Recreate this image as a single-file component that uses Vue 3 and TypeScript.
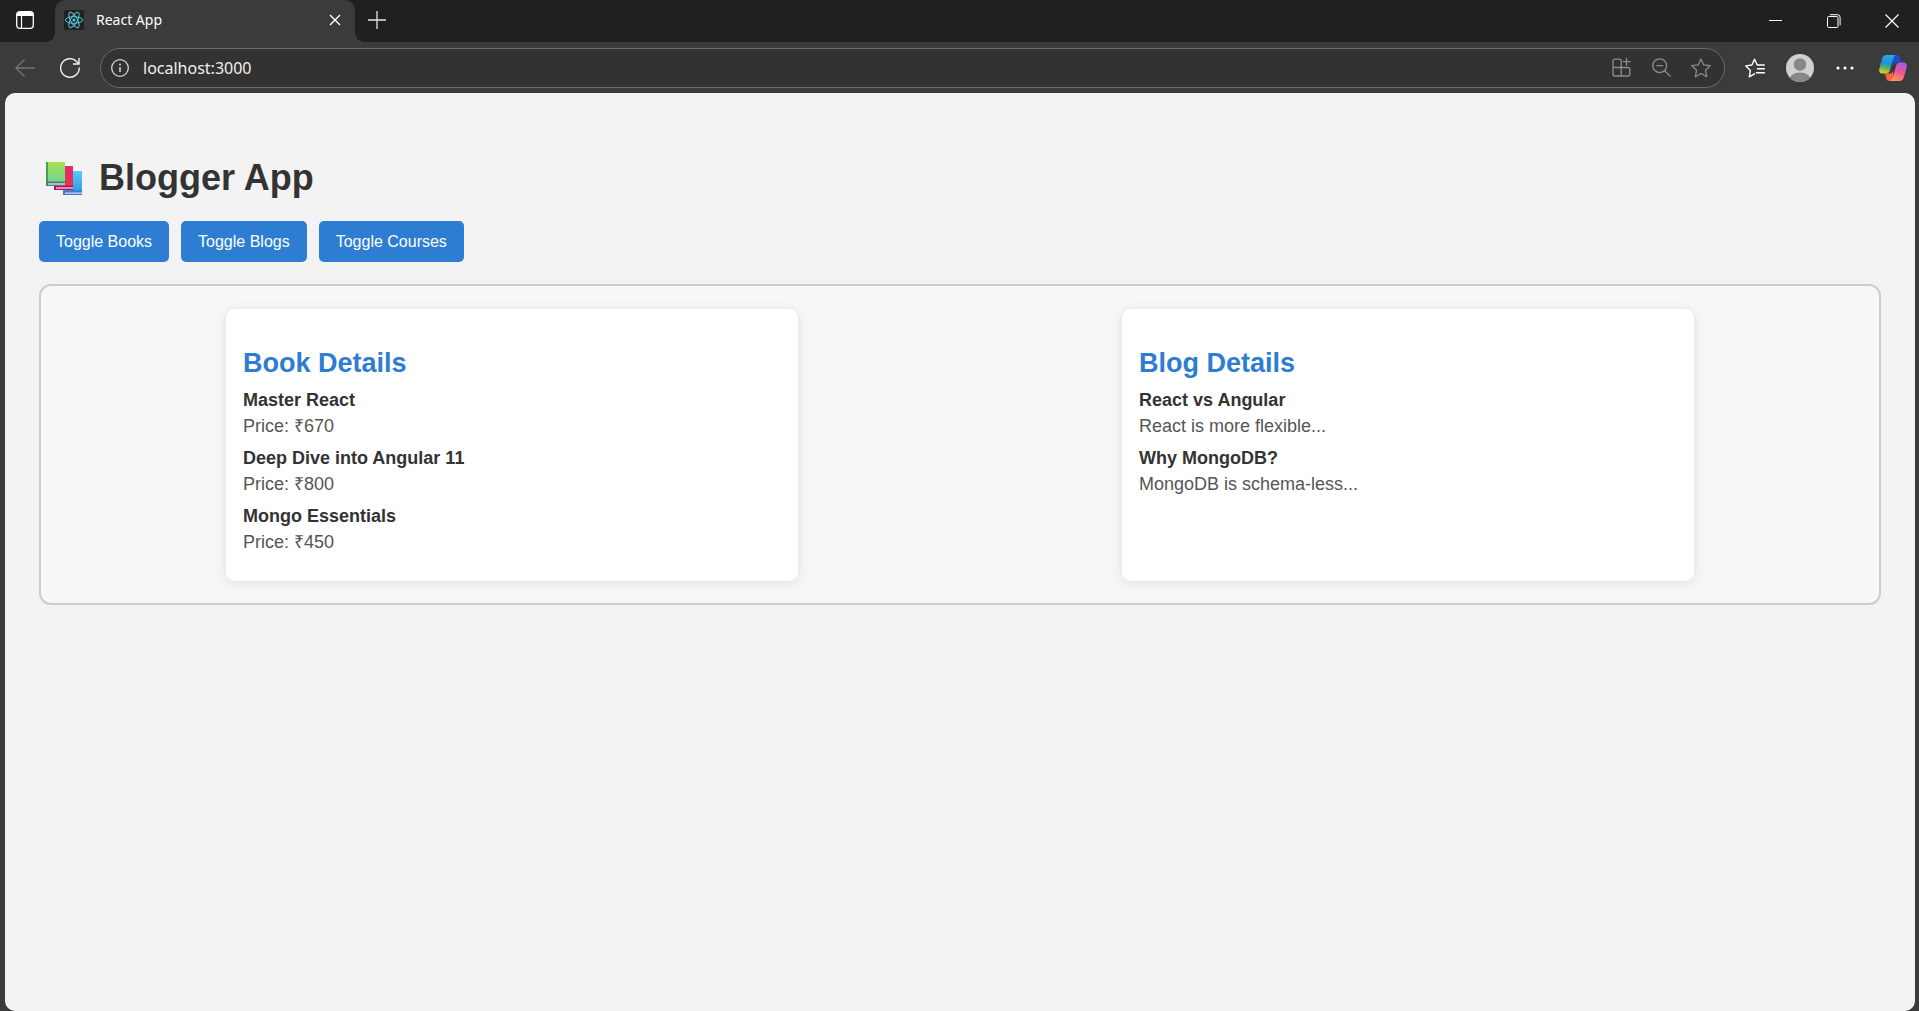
<script setup lang="ts">
import { ref } from 'vue'

interface Entry {
  title: string
  text: string
}

interface Panel {
  id: string
  heading: string
  entries: Entry[]
}

const address = ref('localhost:3000')
const visible = ref<Record<string, boolean>>({ books: true, blogs: true, courses: false })

const toggles = [
  { id: 'books', label: 'Toggle Books' },
  { id: 'blogs', label: 'Toggle Blogs' },
  { id: 'courses', label: 'Toggle Courses' },
]

const panels: Panel[] = [
  {
    id: 'books',
    heading: 'Book Details',
    entries: [
      { title: 'Master React', text: 'Price: ₹670' },
      { title: 'Deep Dive into Angular 11', text: 'Price: ₹800' },
      { title: 'Mongo Essentials', text: 'Price: ₹450' },
    ],
  },
  {
    id: 'blogs',
    heading: 'Blog Details',
    entries: [
      { title: 'React vs Angular', text: 'React is more flexible...' },
      { title: 'Why MongoDB?', text: 'MongoDB is schema-less...' },
    ],
  },
]

function toggle(id: string) {
  visible.value[id] = !visible.value[id]
}
</script>

<template>
  <div class="browser">
    <header class="tab-strip">
      <button class="workspace" type="button" aria-label="Tab actions">
        <svg width="18" height="18" viewBox="0 0 18 18" fill="none" stroke="#fff">
          <rect x="0.7" y="0.7" width="16.6" height="16.6" rx="3" stroke-width="1.3" />
          <path d="M1 3.5a2.5 2.5 0 0 1 2.500-2.500h11a2.500 2.500 0 0 1 2.500 2.500V5H1z" fill="#fff" stroke="none" />
          <path d="M5.500 5v12" stroke-width="1.2" />
        </svg>
      </button>
      <div class="tab">
        <svg class="favicon" width="20" height="20" viewBox="0 0 20 20" fill="none" stroke="#58c4dc" stroke-width="1">
          <rect width="20" height="20" rx="1" fill="#222" stroke="none" />
          <ellipse cx="10" cy="10" rx="8.600" ry="3.300" />
          <ellipse cx="10" cy="10" rx="8.600" ry="3.300" transform="rotate(60 10 10)" />
          <ellipse cx="10" cy="10" rx="8.600" ry="3.300" transform="rotate(120 10 10)" />
          <circle cx="10" cy="10" r="1.600" fill="#58c4dc" stroke="none" />
        </svg>
        <span class="tab-title">React App</span>
        <button class="tab-close" type="button" aria-label="Close tab">
          <svg width="12" height="12" viewBox="0 0 12 12" stroke="#fff" stroke-width="1.4">
            <path d="M1 1l10 10M11 1L1 11" />
          </svg>
        </button>
      </div>
      <button class="new-tab" type="button" aria-label="New tab">
        <svg width="18" height="18" viewBox="0 0 18 18" stroke="#e6e6e6" stroke-width="1.3">
          <path d="M9 0v18M0 9h18" />
        </svg>
      </button>
      <div class="window-controls">
        <button type="button" aria-label="Minimize">
          <svg width="14" height="14" viewBox="0 0 14 14" stroke="#fff"><path d="M0 6.500h13" /></svg>
        </button>
        <button type="button" aria-label="Restore">
          <svg width="14" height="14" viewBox="0 0 14 14" fill="none" stroke="#fff">
            <rect x="0.5" y="2.500" width="10.500" height="11" rx="1.200" />
            <path d="M3 .7h7.500a2.600 2.600 0 0 1 2.600 2.600v8" />
          </svg>
        </button>
        <button type="button" aria-label="Close window">
          <svg width="14" height="14" viewBox="0 0 14 14" stroke="#fff" stroke-width="1.200">
            <path d="M.5.5l13 13M13.500.5l-13 13" />
          </svg>
        </button>
      </div>
    </header>

    <nav class="toolbar" aria-label="Browser toolbar">
      <button class="tool" type="button" aria-label="Back" disabled>
        <svg width="20" height="18" viewBox="0 0 20 18" fill="none" stroke="#757575" stroke-width="1.300">
          <path d="M20 9H1M9.500.5L1 9l8.500 8.500" />
        </svg>
      </button>
      <button class="tool" type="button" aria-label="Reload">
        <svg width="20" height="20" viewBox="0 0 20 20" fill="none" stroke="#f2f2f2" stroke-width="1.400">
          <path d="M19.200 9.500A9.300 9.300 0 1 1 16.800 3.700L18.800 5.700" />
          <path d="M19 0v6h-6" />
        </svg>
      </button>
      <div class="omnibox">
        <svg width="18" height="18" viewBox="0 0 18 18" fill="none" stroke="#d6d6d6" stroke-width="1.300">
          <circle cx="9" cy="9" r="8.300" />
          <path d="M9 8v5" stroke-width="1.500" />
          <circle cx="9" cy="5.500" r="1" fill="#d6d6d6" stroke="none" />
        </svg>
        <input v-model="address" class="address" type="text" aria-label="Address" />
        <button type="button" aria-label="Install app">
          <svg width="19" height="19" viewBox="0 0 19 19" fill="none" stroke="#8c8c8c" stroke-width="1.300">
            <path d="M9.200 9.500V3.200a2 2 0 0 0-2-2H3a2 2 0 0 0-2 2V16a2 2 0 0 0 2 2h12.800a2 2 0 0 0 2-2v-4.500a2 2 0 0 0-2-2H1M9.200 9.500V18" />
            <path d="M14.500 0v7.500M10.800 3.700h7.700" />
          </svg>
        </button>
        <button type="button" aria-label="Zoom">
          <svg width="19" height="19" viewBox="0 0 19 19" fill="none" stroke="#8c8c8c" stroke-width="1.300">
            <circle cx="7.700" cy="7.700" r="6.900" />
            <path d="M4.300 7.700h6.800M12.700 12.700l5.800 5.800" />
          </svg>
        </button>
        <button type="button" aria-label="Add to favorites">
          <svg width="20" height="20" viewBox="0 0 20 20" fill="none" stroke="#8c8c8c" stroke-width="1.300" stroke-linejoin="round">
            <path d="M10 1l2.700 5.900 6.500.8-4.800 4.500 1.300 6.500L10 15.500l-5.700 3.200 1.300-6.500L.8 7.700l6.500-.8z" />
          </svg>
        </button>
      </div>
      <button class="tool" type="button" aria-label="Favorites">
        <svg width="20" height="20" viewBox="0 0 20 20" fill="none" stroke="#fff" stroke-width="1.400" stroke-linejoin="round" stroke-linecap="round">
          <path d="M9.500 15.800L4.300 18.800l1.100-6.400L.8 7.900l6.100-.9L9.500 1.200 12.200 7h7" />
          <path d="M12.500 10.800h7M11.500 14.700h8" />
        </svg>
      </button>
      <button class="tool" type="button" aria-label="Profile">
        <svg width="28" height="28" viewBox="0 0 28 28">
          <defs><clipPath id="avatar"><circle cx="14" cy="14" r="14" /></clipPath></defs>
          <g clip-path="url(#avatar)">
            <rect width="28" height="28" fill="#d2d0ce" />
            <circle cx="14" cy="10.500" r="6.200" fill="#8a8886" />
            <ellipse cx="14" cy="26" rx="11" ry="7.500" fill="#8a8886" />
          </g>
        </svg>
      </button>
      <button class="tool" type="button" aria-label="Settings and more">
        <svg width="18" height="4" viewBox="0 0 18 4" fill="#fff">
          <circle cx="2" cy="2" r="1.600" /><circle cx="9" cy="2" r="1.600" /><circle cx="16" cy="2" r="1.600" />
        </svg>
      </button>
      <button class="tool copilot" type="button" aria-label="Copilot">
        <svg width="28" height="26" viewBox="0 0 28 26">
          <defs>
            <linearGradient id="cool" x1="0.5" y1="0" x2="0.3" y2="1">
              <stop offset="0" stop-color="#27a9f0" /><stop offset="0.45" stop-color="#1e90d8" />
              <stop offset="0.7" stop-color="#59b45b" /><stop offset="1" stop-color="#f4cc12" />
            </linearGradient>
            <linearGradient id="warm" x1="0.7" y1="0" x2="0.3" y2="1">
              <stop offset="0" stop-color="#a25bf0" /><stop offset="0.5" stop-color="#ee5590" />
              <stop offset="1" stop-color="#ff9a50" />
            </linearGradient>
          </defs>
          <path d="M14 0h3.800c1.800 0 2.500 1.300 3 3l1.200 4.500h-4.500c-2 0-3 1-3.600 3z" fill="#174fd6" />
          <path d="M14 26h-3.800c-1.800 0-2.500-1.300-3-3L6 18.500h4.500c2 0 3-1 3.600-3z" fill="#f4653e" />
          <path d="M7.500 0H17c-1.600.4-2.200 1.800-2.700 3.500l-3.500 12c-.7 2.300-2 3-4 3H3.500C.8 18.500-.4 16.500.3 13.700L3 4C3.800 1.200 5.200 0 7.500 0z" fill="url(#cool)" />
          <path d="M20.500 26H11c1.600-.4 2.200-1.800 2.700-3.500l3.500-12c.7-2.300 2-3 4-3h3.300c2.700 0 3.900 2 3.200 4.800L25 22c-.8 2.800-2.200 4-4.500 4z" fill="url(#warm)" />
        </svg>
      </button>
    </nav>

    <main class="page">
      <h1>
        <svg width="36" height="34" viewBox="0 0 36 34" aria-hidden="true">
          <defs>
            <linearGradient id="green" x1="0" y1="0" x2="0" y2="1">
              <stop offset="0" stop-color="#a6e04f" /><stop offset="1" stop-color="#6fd694" />
            </linearGradient>
            <linearGradient id="red" x1="0" y1="0" x2="0" y2="1">
              <stop offset="0" stop-color="#e32a78" /><stop offset="1" stop-color="#e0383f" />
            </linearGradient>
            <linearGradient id="blue" x1="0" y1="0" x2="0" y2="1">
              <stop offset="0" stop-color="#52cdf5" /><stop offset="1" stop-color="#2f9bee" />
            </linearGradient>
          </defs>
          <rect x="17" y="10" width="19" height="21" fill="url(#blue)" />
          <path d="M17 29.500h19V34H17z" fill="#3f78cc" />
          <path d="M19 31.500h17v1.300H19z" fill="#d9d0f5" />
          <rect x="8" y="5" width="19" height="21" fill="url(#red)" />
          <path d="M8 24.500h19V29H8z" fill="#b01350" />
          <path d="M10 26.300h17v1.400H10z" fill="#f3c7e6" />
          <rect y="1" width="19" height="21" fill="url(#green)" />
          <path d="M0 1h2v21H0z" fill="#46a04d" />
          <path d="M0 20.500h19V25H0z" fill="#4d7d78" />
          <path d="M2 22.300h17v1.400H2z" fill="#ddd3f0" />
        </svg>
        <span>Blogger App</span>
      </h1>

      <div class="toggles">
        <button v-for="item in toggles" :key="item.id" type="button" :aria-pressed="visible[item.id]" @click="toggle(item.id)">
          {{ item.label }}
        </button>
      </div>

      <div class="board">
        <template v-for="panel in panels" :key="panel.id">
          <section v-if="visible[panel.id]" class="card">
            <h2>{{ panel.heading }}</h2>
            <article v-for="entry in panel.entries" :key="entry.title">
              <h3>{{ entry.title }}</h3>
              <p>{{ entry.text }}</p>
            </article>
          </section>
        </template>
      </div>
    </main>
  </div>
</template>

<style>
body {
  background: #3b3b3b;
}
</style>

<style scoped>
.browser {
  display: flex;
  flex-direction: column;
  min-height: 100vh;
  background: #3b3b3b;
  font-family: "Noto Sans", sans-serif;
}

button {
  display: flex;
  align-items: center;
  justify-content: center;
  padding: 0;
  border: 0;
  background: none;
  font: inherit;
}

svg {
  display: block;
  flex: none;
}

.tab-strip {
  display: flex;
  height: 42px;
  background: #202020;
}

.workspace {
  width: 50px;
  height: 40px;
  margin-right: 5px;
}

.tab {
  position: relative;
  display: flex;
  align-items: center;
  box-sizing: border-box;
  width: 300px;
  padding: 0 12px 2px 9px;
  border-radius: 10px 10px 0 0;
  background: #3b3b3b;
}

.tab::before,
.tab::after {
  content: "";
  position: absolute;
  bottom: 0;
  width: 10px;
  height: 10px;
}

.tab::before {
  right: 100%;
  background: radial-gradient(circle at 0 0, #202020 10px, #3b3b3b 10px);
}

.tab::after {
  left: 100%;
  background: radial-gradient(circle at 100% 0, #202020 10px, #3b3b3b 10px);
}

.tab-title {
  flex: 1;
  margin-left: 12px;
  color: #fff;
  font-size: 14px;
  line-height: 20px;
}

.tab-close {
  width: 16px;
  height: 16px;
}

.new-tab {
  width: 44px;
  height: 40px;
}

.window-controls {
  display: flex;
  gap: 4px;
  margin-left: auto;
}

.window-controls button {
  width: 54px;
}

.toolbar {
  display: flex;
  align-items: center;
  height: 51px;
  padding: 0 1px 0 2px;
}

.tool {
  flex: none;
  width: 45px;
  height: 40px;
}

.copilot {
  width: 51px;
}

.omnibox {
  display: flex;
  flex: 1;
  align-items: center;
  box-sizing: border-box;
  height: 40px;
  margin: 0 7px 0 8px;
  padding: 0 3px 0 10px;
  border: 1px solid #6b6b6b;
  border-radius: 20px;
  background: #323232;
}

.omnibox button {
  width: 40px;
  height: 32px;
}

.address {
  flex: 1;
  min-width: 0;
  height: 32px;
  margin-left: 14px;
  padding: 0;
  border: 0;
  outline: 0;
  background: none;
  color: #f0f0f0;
  font: 16px/24px "Noto Sans", sans-serif;
}

.page {
  flex: 1;
  margin: 0 4px 0 5px;
  padding: 64px 34px 34px;
  border-radius: 10px;
  background: #f3f3f3;
  font-family: "Liberation Sans", Arial, sans-serif;
}

h1,
h2,
h3,
p {
  margin: 0;
}

h1 {
  display: flex;
  align-items: center;
  gap: 17px;
  padding-left: 7px;
  color: #333;
  font-size: 36px;
  line-height: 42px;
}

.toggles {
  display: flex;
  gap: 12px;
  margin: 22px 0;
}

.toggles button {
  height: 41px;
  padding: 0 17px;
  border-radius: 5px;
  background: #2d7dd2;
  color: #fff;
  font-size: 16px;
}

.board {
  display: flex;
  justify-content: space-around;
  padding: 23px 23px 22px;
  border: 2px solid #ccc;
  border-radius: 12px;
  background: #f7f7f7;
}

.card {
  box-sizing: border-box;
  width: 572px;
  padding: 38px 17px 26px;
  border-radius: 9px;
  background: #fff;
  box-shadow: 0 2px 12px rgba(0, 0, 0, 0.1);
}

h2 {
  margin-bottom: 8px;
  color: #2d7dd2;
  font-size: 27px;
  line-height: 32px;
}

article + article {
  margin-top: 6px;
}

h3 {
  color: #333;
  font-size: 18px;
  line-height: 26px;
}

p {
  color: #555;
  font-size: 18px;
  line-height: 26px;
}
</style>
